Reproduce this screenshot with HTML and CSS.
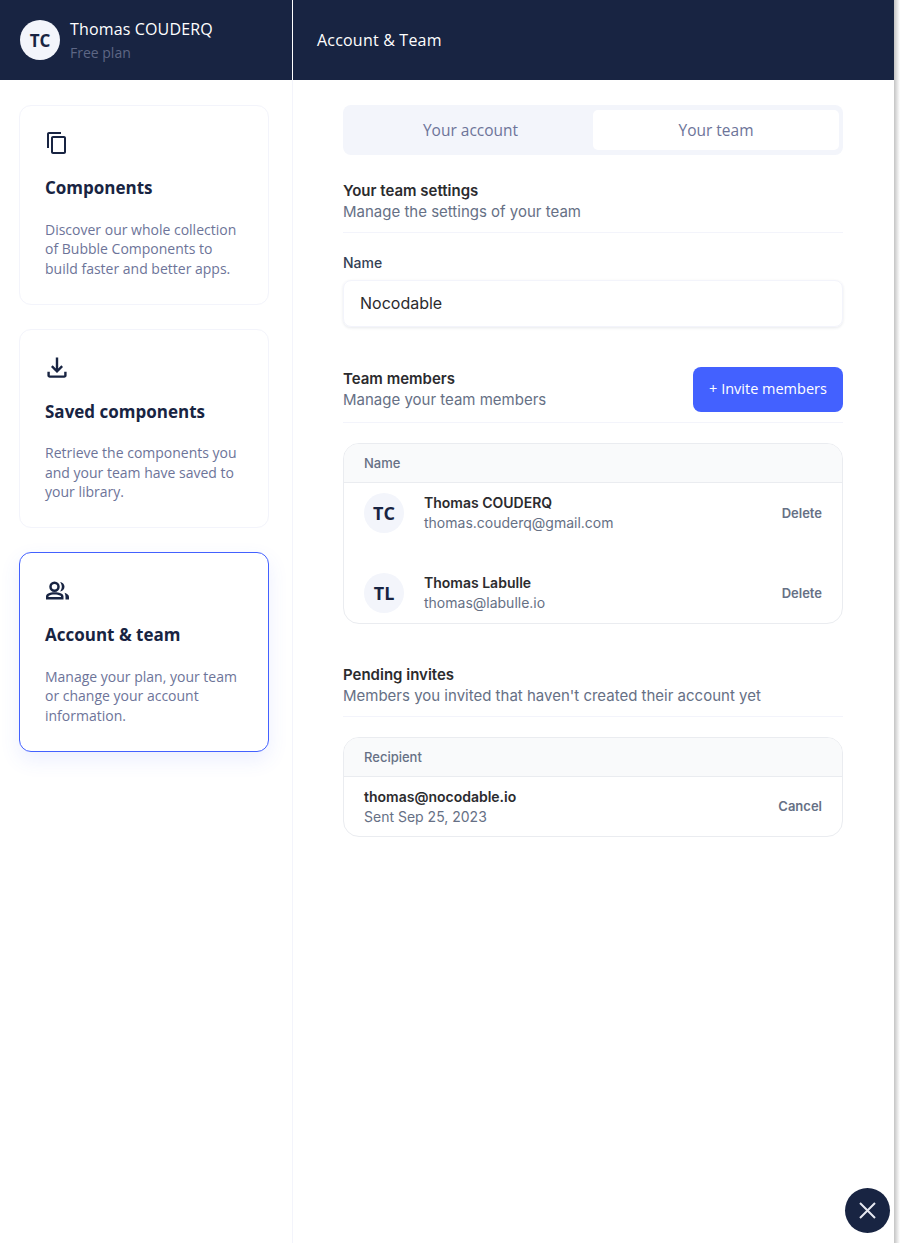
FILE: index.html
```html
<!DOCTYPE html>
<html lang="en">
<head>
<meta charset="utf-8">
<title>Account &amp; Team</title>
<link rel="stylesheet" href="styles.css">
</head>
<body>
<div class="app">
  <aside class="sidebar">
    <header class="user-bar">
      <div class="avatar avatar-light">TC</div>
      <div class="user-text">
        <div class="user-name">Thomas COUDERQ</div>
        <div class="user-plan">Free plan</div>
      </div>
    </header>
    <nav class="nav">
      <a class="card">
        <svg class="icon" width="24" height="24" viewBox="0 0 24 24"><path d="M16 1H4c-1.1 0-2 .9-2 2v14h2V3h12V1zm3 4H8c-1.1 0-2 .9-2 2v14c0 1.1.9 2 2 2h11c1.1 0 2-.9 2-2V7c0-1.1-.9-2-2-2zm0 16H8V7h11v14z"/></svg>
        <h2 class="card-title">Components</h2>
        <p class="card-text">Discover our whole collection of Bubble Components to build faster and better apps.</p>
      </a>
      <a class="card">
        <svg class="icon" width="24" height="24" viewBox="2 1 20 20"><path d="M12 16l-5-5 1.4-1.45 2.6 2.6V3h2v9.15l2.6-2.6L17 11l-5 5zM6 20c-.55 0-1.02-.2-1.41-.59C4.2 19.02 4 18.55 4 18v-3h2v3h12v-3h2v3c0 .55-.2 1.02-.59 1.41-.39.39-.86.59-1.41.59H6z"/></svg>
        <h2 class="card-title">Saved components</h2>
        <p class="card-text">Retrieve the components you and your team have saved to your library.</p>
      </a>
      <a class="card card-active">
        <svg class="icon" width="24" height="24" viewBox="0 0 24 24"><path fill-rule="evenodd" d="M9.500 3.500a5.250 5.250 0 1 1 0 10.500 5.250 5.250 0 0 1 0-10.500zm0 2.500a2.750 2.750 0 1 0 0 5.500 2.750 2.750 0 0 0 0-5.500zM1 21.500v-3c0-1.200.6-2.200 1.700-2.800C4.900 14.600 7.300 14.200 9.500 14.200s5.100.4 7.300 1.500c1.100.6 1.700 1.600 1.700 2.800v3H1zm2.500-2.500h12.500v-.5c0-.3-.2-.6-.5-.7-1.800-1-3.900-1.300-6-1.300s-4.200.3-5.500 1.300c-.3.1-.5.4-.5.7v.5z"/><path d="M15 4c2.500.2 4.500 2.200 4.500 4.800s-2 4.600-4.500 4.800c1.100-1.300 1.800-3 1.800-4.800S16.100 5.300 15 4zM19.500 14.800c2.600.9 4.500 2.300 4.500 4.200v2.500h-3.500V19c0-1.700-.3-3-1-4.200z"/></svg>
        <h2 class="card-title">Account &amp; team</h2>
        <p class="card-text">Manage your plan, your team or change your account information.</p>
      </a>
    </nav>
  </aside>
  <main class="main">
    <header class="title-bar">Account &amp; Team</header>
    <div class="content">
      <div class="tabs">
        <div class="tab">Your account</div>
        <div class="tab tab-active">Your team</div>
      </div>

      <section class="section-head section-settings">
        <div>
          <h3 class="section-title">Your team settings</h3>
          <p class="section-sub">Manage the settings of your team</p>
        </div>
      </section>

      <div class="field">
        <div class="field-label">Name</div>
        <div class="field-input">Nocodable</div>
      </div>

      <section class="section-head section-members">
        <div>
          <h3 class="section-title">Team members</h3>
          <p class="section-sub">Manage your team members</p>
        </div>
        <button class="btn">+ Invite members</button>
      </section>

      <div class="table">
        <div class="table-head">Name</div>
        <div class="member">
          <div class="avatar avatar-soft">TC</div>
          <div class="member-text">
            <div class="row-title">Thomas COUDERQ</div>
            <div class="row-sub">thomas.couderq@gmail.com</div>
          </div>
          <div class="row-action">Delete</div>
        </div>
        <div class="member">
          <div class="avatar avatar-soft">TL</div>
          <div class="member-text">
            <div class="row-title">Thomas Labulle</div>
            <div class="row-sub">thomas@labulle.io</div>
          </div>
          <div class="row-action">Delete</div>
        </div>
      </div>

      <section class="section-head section-pending">
        <div>
          <h3 class="section-title">Pending invites</h3>
          <p class="section-sub">Members you invited that haven't created their account yet</p>
        </div>
      </section>

      <div class="table">
        <div class="table-head">Recipient</div>
        <div class="invite">
          <div class="member-text">
            <div class="row-title">thomas@nocodable.io</div>
            <div class="row-sub">Sent Sep 25, 2023</div>
          </div>
          <div class="row-action">Cancel</div>
        </div>
      </div>
    </div>
  </main>
  <div class="edge"></div>
  <button class="close" aria-label="Close">
    <svg width="45" height="45" viewBox="0 0 45 45"><path d="M15 15l15 15M30 15L15 30" stroke="#e6e8f0" stroke-width="2" fill="none"/></svg>
  </button>
</div>
</body>
</html>
```

FILE: styles.css
```css
* { box-sizing: border-box; }
html, body { margin: 0; padding: 0; height: 100%; background: #fff; }
body { font-family: "Inter", sans-serif; overflow: hidden; }

.app { position: relative; display: flex; height: 1243px; width: 900px; }

/* sidebar */
.sidebar { width: 293px; flex: none; border-right: 1px solid #f3f4fb; font-family: "Open Sans", sans-serif; }
.user-bar { height: 80px; display: flex; align-items: center; gap: 10px; padding: 2px 0 0 20px; background: #182442; color: #fff; margin-right: -1px; border-right: 1px solid #fff; }
.avatar { width: 40px; height: 40px; border-radius: 50%; flex: none; display: flex; align-items: center; justify-content: center; font-family: "Open Sans", sans-serif; font-weight: 700; font-size: 17px; color: #182442; background: #f3f5fb; }
.avatar-light { margin-top: -2px; }
.user-text { display: flex; flex-direction: column; gap: 3px; }
.user-name { font-size: 16px; font-weight: 500; line-height: 21px; letter-spacing: 0.15px; }
.user-plan { font-size: 14px; line-height: 20px; color: #5e6785; }

.nav { display: flex; flex-direction: column; gap: 24px; padding: 25px 23px 0 19px; }
.card { display: block; height: 199.7px; padding: 25px 25px 0; border: 1px solid #f3f4fb; border-radius: 12px; background: #fff; }
.card-active { border-color: #4361ff; box-shadow: 0 8px 20px rgba(67, 97, 255, 0.1); }
.icon { display: block; fill: #182442; }
.card-title { margin: 20px 0 0; font-size: 17px; line-height: 26px; font-weight: 700; color: #182442; }
.card-text { margin: 18.5px 0 0; font-size: 14px; line-height: 19.6px; color: #6d7499; }

/* main */
.main { flex: 1; min-width: 0; }
.title-bar { height: 80px; display: flex; align-items: center; padding-left: 24px; background: #182442; color: #fff; font-family: "Open Sans", sans-serif; font-size: 16px; font-weight: 500; letter-spacing: 0.2px; }
.content { width: 500px; margin: 25px 0 0 50px; }

.tabs { display: flex; height: 50px; padding: 5px 4px 5px 5px; border-radius: 8px; background: #f3f5fb; }
.tab { flex: 1; display: flex; align-items: center; justify-content: center; border-radius: 5px; font-family: "Open Sans", sans-serif; font-size: 15.5px; font-weight: 500; color: #6d7499; }
.tab-active { flex: none; width: 246px; background: #fff; }

.section-head { display: flex; align-items: flex-end; justify-content: space-between; border-bottom: 1px solid #f3f4fb; }
.section-settings { margin-top: 25px; height: 53px; }
.section-settings > div, .section-pending > div { padding-bottom: 10px; }
.section-members { margin-top: 40px; height: 56px; }
.section-members > div { padding-bottom: 12px; }
.section-members .btn { margin-bottom: 10px; }
.section-pending { margin-top: 40px; height: 53px; }
.section-title { margin: 0; font-size: 15px; line-height: 20px; font-weight: 600; color: #2b2b2e; }
.section-sub { margin: 1px 0 0; font-size: 15px; line-height: 20px; color: #667085; }

.field { margin-top: 20px; }
.field-label { font-size: 14px; line-height: 20px; font-weight: 500; color: #344054; }
.field-input { margin-top: 7px; height: 47px; display: flex; align-items: center; padding: 0 0 2px 16px; border: 1px solid #f3f4fb; border-radius: 8px; font-size: 16px; color: #2b2b2e; box-shadow: 0 1px 3px rgba(24, 36, 66, 0.1); }

.btn { width: 150px; height: 45px; border: 0; border-radius: 8px; background: #4361ff; color: #fff; font-family: "Open Sans", sans-serif; font-size: 14.5px; font-weight: 500; padding: 0 0 2px; }

.table { margin-top: 20px; border: 1px solid #eaecf0; border-radius: 16px; overflow: hidden; }
.table-head { height: 39px; display: flex; align-items: center; padding-left: 20px; background: #f9fafb; border-bottom: 1px solid #eaecf0; font-size: 13px; font-weight: 500; color: #667085; }
.member { display: flex; align-items: flex-start; height: 80px; padding: 10px 20px 0; }
.member:last-child { height: 60px; margin-top: 0; }
.avatar-soft { font-size: 18px; }
.member-text { flex: 1; margin-left: 20px; }
.invite { display: flex; align-items: center; height: 59px; padding: 0 20px; }
.invite .member-text { margin-left: 0; }
.row-title { font-size: 14px; line-height: 20px; font-weight: 600; color: #2b2b2e; }
.row-sub { font-size: 14px; line-height: 20px; color: #667085; }
.row-action { font-size: 13px; font-weight: 600; line-height: 40px; color: #667085; }
.invite .row-action { line-height: 20px; margin-bottom: 2px; }

/* window edge + close */
.edge { width: 6px; flex: none; background: linear-gradient(90deg, #c4c4c4, #e8e8e8 60%, #fff); }
.close { position: absolute; left: 845px; top: 1188px; width: 45px; height: 45px; padding: 0; border: 0; border-radius: 50%; background: #182442; }
.close svg { display: block; }
```
